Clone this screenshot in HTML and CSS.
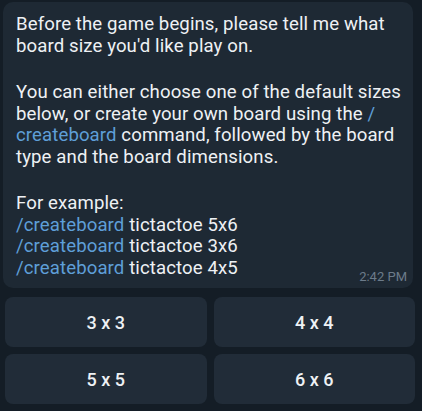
FILE: index.html
```html
<!DOCTYPE html>
<html>
<head>
<meta charset="utf-8">
<link rel="stylesheet" href="styles.css">
</head>
<body>
<div class="chat">
  <div class="bubble">
    <p class="para">Before the game begins, please tell me what<br>board size you'd like play on.</p>
    <p class="para">You can either choose one of the default sizes<br>below, or create your own board using the <span class="link">/</span><br><span class="link">createboard</span> command, followed by the board<br>type and the board dimensions.</p>
    <div class="para last">
      <p class="lines">For example:<br><span class="link">/createboard</span> tictactoe 5x6<br><span class="link">/createboard</span> tictactoe 3x6<br><span class="link">/createboard</span> tictactoe 4x5</p>
      <span class="time">2:42 PM</span>
    </div>
  </div>
  <div class="keyboard">
    <button class="key">3 x 3</button>
    <button class="key">4 x 4</button>
    <button class="key">5 x 5</button>
    <button class="key">6 x 6</button>
  </div>
</div>
</body>
</html>
```
FILE: styles.css
```css
html, body {
  margin: 0;
  padding: 0;
  background: #141d26;
}
body {
  width: 422px;
  height: 411px;
  overflow: hidden;
  font-family: Roboto, "Liberation Sans", sans-serif;
}
.chat {
  padding-top: 2px;
}
.bubble {
  margin: 0 9px 0 3px;
  background: #1e2934;
  border-radius: 10px;
  padding: 12px 6px 9px 13px;
  color: #eef1f4;
  font-size: 18.6px;
  letter-spacing: 0.1px;
  line-height: 21.5px;
}
.para {
  margin: 0 0 25px 0;
  white-space: nowrap;
}
.para.last {
  margin-bottom: 0;
  display: flex;
  align-items: flex-start;
}
.lines {
  margin: 0;
  flex: 1;
}
.link {
  color: #5e9fd8;
}
.time {
  align-self: flex-end;
  font-size: 13px;
  letter-spacing: 0;
  line-height: 16px;
  color: #6c7b8a;
  margin-bottom: -6px;
}
.keyboard {
  display: grid;
  grid-template-columns: 1fr 1fr;
  gap: 7px;
  padding: 9px 7px 0 5px;
}
.key {
  height: 50px;
  border: none;
  border-radius: 8px;
  background: #212c38;
  color: #eef1f4;
  font-family: Roboto, "Liberation Sans", sans-serif;
  font-weight: 500;
  font-size: 18px;
  padding: 0;
}
```
